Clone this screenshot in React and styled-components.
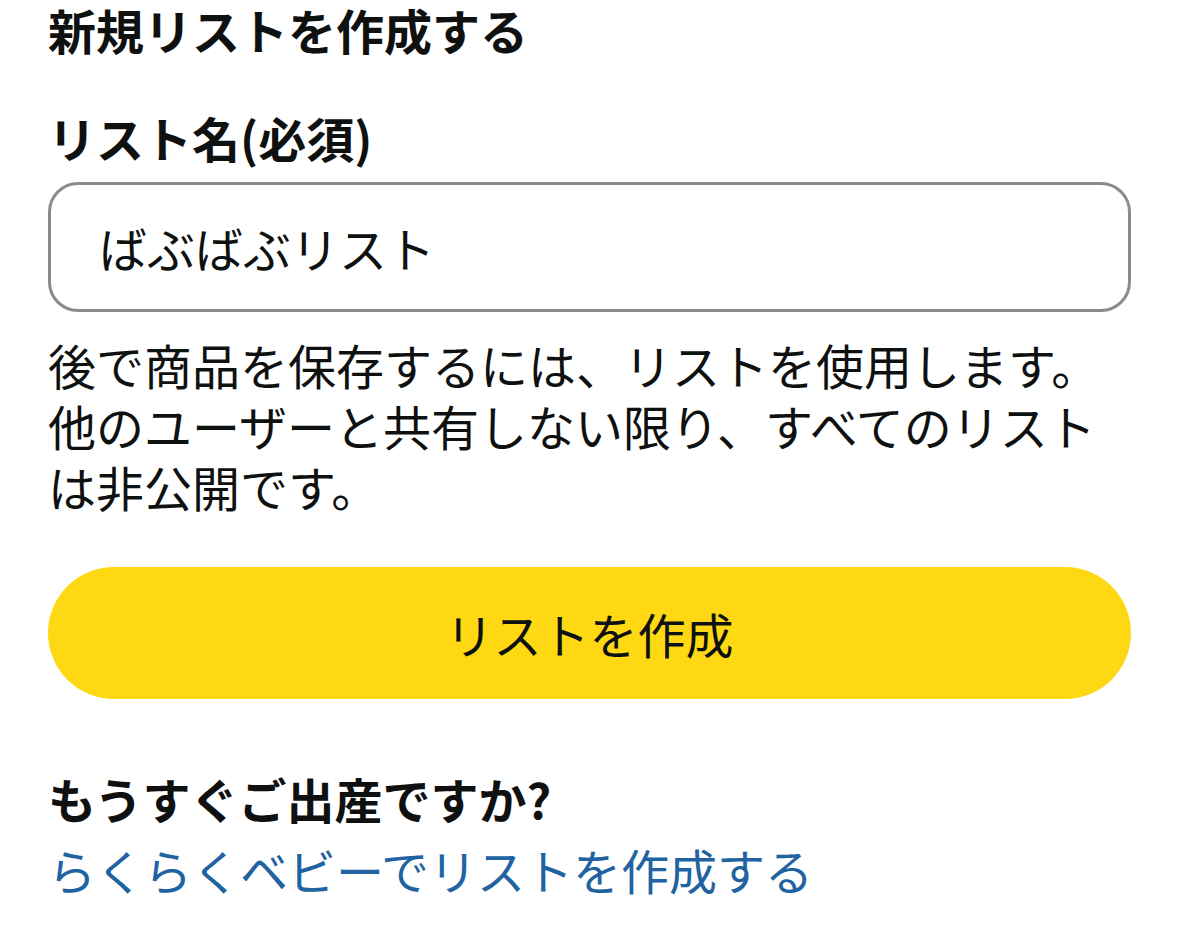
import React from 'react';
import styled, { createGlobalStyle } from 'styled-components';

const GlobalStyle = createGlobalStyle`
  html, body {
    margin: 0;
    padding: 0;
    background: #ffffff;
  }
  body {
    font-family: "Noto Sans CJK JP", "Noto Sans", sans-serif;
    color: #0f1111;
  }
`;

const Page = styled.main`
  padding: 0 48px;
  display: flex;
  flex-direction: column;
`;

const Heading = styled.h1`
  margin: 0;
  font-size: 48px;
  font-weight: 700;
  line-height: 58px;
`;

const Label = styled.label`
  margin-top: 50px;
  font-size: 48px;
  font-weight: 700;
  line-height: 58px;
`;

const Input = styled.input`
  margin-top: 16px;
  box-sizing: border-box;
  width: 100%;
  height: 130px;
  padding: 0 48px;
  border: 3px solid #888c8c;
  border-radius: 30px;
  font-family: inherit;
  font-size: 48px;
  color: #0f1111;
  background: #fff;
  outline: none;
`;

const Help = styled.p`
  margin: 22px 0 0;
  font-size: 48px;
  line-height: 61px;
`;

const PrimaryButton = styled.button`
  margin-top: 50px;
  height: 132px;
  width: 100%;
  border: none;
  border-radius: 66px;
  background: #ffd814;
  font-family: inherit;
  font-size: 48px;
  color: #0f1111;
  cursor: pointer;
`;

const SubHeading = styled.h2`
  margin: 70px 0 0;
  font-size: 48px;
  font-weight: 700;
  line-height: 58px;
`;

const Link = styled.a`
  margin-top: 12px;
  font-size: 48px;
  line-height: 60px;
  color: #2162a1;
  text-decoration: none;
`;

export default function App() {
  return (
    <>
      <GlobalStyle />
      <Page>
        <Heading>新規リストを作成する</Heading>
        <Label htmlFor="list-name">リスト名(必須)</Label>
        <Input id="list-name" defaultValue="ばぶばぶリスト" />
        <Help>
          後で商品を保存するには、リストを使用します。他のユーザーと共有しない限り、すべてのリストは非公開です。
        </Help>
        <PrimaryButton>リストを作成</PrimaryButton>
        <SubHeading>もうすぐご出産ですか?</SubHeading>
        <Link href="#">らくらくベビーでリストを作成する</Link>
      </Page>
    </>
  );
}
